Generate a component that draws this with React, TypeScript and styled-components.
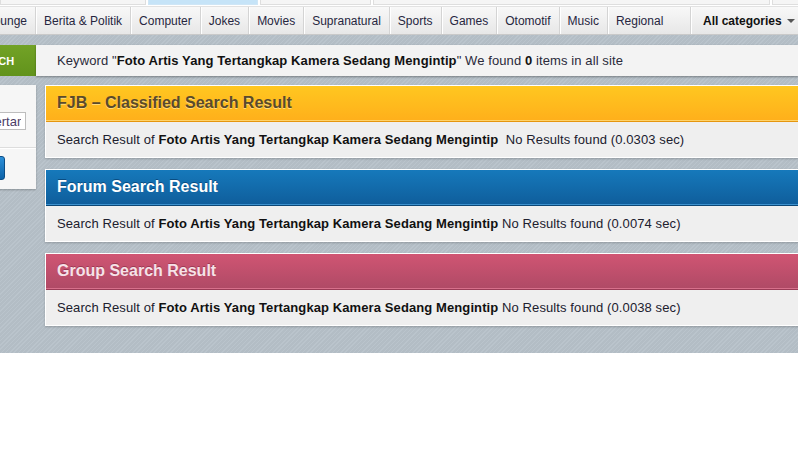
import React from 'react';
import styled, { createGlobalStyle, css } from 'styled-components';

const GlobalStyle = createGlobalStyle`
  html, body {
    margin: 0;
    padding: 0;
    background: #ffffff;
    font-family: "Liberation Sans", Arial, Helvetica, sans-serif;
    overflow: hidden;
  }
`;

type Tone = 'fjb' | 'forum' | 'group';

const tones = {
  fjb: {
    top: '#ffc720',
    bottom: '#ffb01b',
    border: '#e5960f',
    line: '#ffd36a',
    title: '#5a4a2c',
    shadow: '0 1px 0 rgba(255, 230, 150, 0.8)',
  },
  forum: {
    top: '#1679bb',
    bottom: '#0f5e9c',
    border: '#0b4776',
    line: '#3d92cf',
    title: '#ffffff',
    shadow: '0 -1px 0 rgba(0, 40, 80, 0.5)',
  },
  group: {
    top: '#d05573',
    bottom: '#b04a66',
    border: '#9b3b56',
    line: '#d7708b',
    title: '#f6e2e8',
    shadow: '0 -1px 0 rgba(90, 20, 40, 0.4)',
  },
};

const topTabs = [
  { width: 146, active: false },
  { width: 110, active: true },
  { width: 111, active: false },
  { width: 397, active: false },
  { width: 40, active: false },
];

const categories = [
  'Lounge',
  'Berita & Politik',
  'Computer',
  'Jokes',
  'Movies',
  'Supranatural',
  'Sports',
  'Games',
  'Otomotif',
  'Music',
  'Regional',
];

const query = 'Foto Artis Yang Tertangkap Kamera Sedang Mengintip';

const results: { tone: Tone; title: string; time: string; gap?: boolean }[] = [
  { tone: 'fjb', title: 'FJB – Classified Search Result', time: '0.0303', gap: true },
  { tone: 'forum', title: 'Forum Search Result', time: '0.0074' },
  { tone: 'group', title: 'Group Search Result', time: '0.0038' },
];

const App: React.FC = () => {
  return (
    <>
      <GlobalStyle />
      <Page>
        <TabStrip>
          {topTabs.map((t, i) => (
            <TabStub key={i} $width={t.width} $active={t.active} />
          ))}
        </TabStrip>
        <NavBar>
          <NavList>
            {categories.map((c) => (
              <NavItem key={c}>{c}</NavItem>
            ))}
          </NavList>
          <AllCategories>
            All categories
            <Caret />
          </AllCategories>
        </NavBar>
        <Main>
          <SearchRow>
            <SearchButton>SEARCH</SearchButton>
            <KeywordBar>
              Keyword "<b>{query}</b>" We found <b>0</b> items in all site
            </KeywordBar>
          </SearchRow>
          <Columns>
            <Sidebar>
              <SearchInput readOnly value={query} />
              <Divider />
              <SideButton />
            </Sidebar>
            <Results>
              {results.map((r) => (
                <Panel key={r.tone}>
                  <PanelHeader $tone={r.tone}>{r.title}</PanelHeader>
                  <PanelBody>
                    Search Result of <b>{query}</b>
                    {r.gap ? '\u00a0 ' : ' '}No Results found ({r.time} sec)
                  </PanelBody>
                </Panel>
              ))}
            </Results>
          </Columns>
        </Main>
      </Page>
    </>
  );
};

export default App;

const Page = styled.div`
  width: 798px;
  min-height: 460px;
  background: #ffffff;
  overflow: hidden;
`;

const TabStrip = styled.div`
  display: flex;
  gap: 2px;
  height: 6px;
  overflow: hidden;
`;

const TabStub = styled.div<{ $width: number; $active: boolean }>`
  flex: 0 0 ${(p) => p.$width}px;
  height: 5px;
  box-sizing: border-box;
  border: 1px solid #dedede;
  border-top: none;
  background: ${(p) => (p.$active ? '#c6e4f8' : '#f5f5f5')};
  ${(p) =>
    p.$active &&
    css`
      border-color: #cfe6f6;
    `}
`;

const NavBar = styled.div`
  display: flex;
  height: 29px;
  box-sizing: border-box;
  background: linear-gradient(#f8f8f8, #e7e7e7);
  border-top: 1px solid #e2e2e2;
  border-bottom: 1px solid #c9c9c9;
  font-size: 12px;
  color: #262640;
`;

const NavList = styled.div`
  flex: 1;
  display: flex;
  margin-left: -21px;
`;

const NavItem = styled.div`
  display: flex;
  align-items: center;
  padding: 0 8px;
  border-right: 1px solid #d4d4d4;
  box-shadow: 1px 0 0 #ffffff;
  white-space: nowrap;
  &:last-child {
    flex: 1;
    border-right: none;
    box-shadow: none;
  }
`;

const AllCategories = styled.div`
  display: flex;
  align-items: center;
  width: 95px;
  padding-left: 12px;
  border-left: 1px solid #d4d4d4;
  box-shadow: inset 1px 0 0 #ffffff;
  font-weight: bold;
  color: #111111;
  white-space: nowrap;
`;

const Caret = styled.span`
  display: inline-block;
  margin-left: 5px;
  width: 0;
  height: 0;
  border-left: 4px solid transparent;
  border-right: 4px solid transparent;
  border-top: 4px solid #555555;
`;

const Main = styled.div`
  background-color: #b6c0c8;
  background-image: repeating-linear-gradient(
    135deg,
    #bac4cc 0px,
    #bac4cc 1px,
    #b3bdc5 1px,
    #b3bdc5 3px
  );
  padding: 10px 0 27px;
`;

const SearchRow = styled.div`
  display: flex;
  height: 31px;
`;

const SearchButton = styled.div`
  flex: 0 0 90px;
  margin-left: -54px;
  display: flex;
  align-items: center;
  justify-content: center;
  background: linear-gradient(#72a226, #62931c);
  color: #ffffff;
  font-size: 11px;
  font-weight: bold;
`;

const KeywordBar = styled.div`
  flex: 1;
  padding-left: 21px;
  line-height: 31px;
  background: #f3f3f3;
  box-shadow: 0 1px 2px rgba(0, 0, 0, 0.35);
  font-size: 13px;
  letter-spacing: 0.1px;
  color: #2a2a3a;
  white-space: nowrap;
  b {
    color: #111111;
  }
`;

const Columns = styled.div`
  display: flex;
  align-items: flex-start;
  gap: 9px;
  margin-top: 9px;
`;

const Sidebar = styled.div`
  flex: 0 0 150px;
  min-width: 0;
  margin-left: -114px;
  box-sizing: border-box;
  padding: 27px 10px 9px;
  background: #f6f6f6;
  box-shadow: 0 1px 2px rgba(0, 0, 0, 0.25);
  display: flex;
  flex-direction: column;
`;

const SearchInput = styled.input`
  width: 100%;
  min-width: 0;
  height: 18px;
  box-sizing: border-box;
  padding: 0 4px 0 0;
  border: 1px solid #bdbdbd;
  background: #ffffff;
  font-family: inherit;
  font-size: 13px;
  color: #4a3d66;
  outline: none;
`;

const Divider = styled.div`
  height: 1px;
  margin: 17px -10px 8px;
  background: #dddddd;
  box-shadow: 0 1px 0 #ffffff;
`;

const SideButton = styled.div`
  width: 109px;
  height: 24px;
  box-sizing: border-box;
  border: 1px solid #0b4d86;
  border-radius: 3px;
  background: linear-gradient(#2c8fd8, #0c62a8);
`;

const Results = styled.div`
  flex: 1;
  min-width: 0;
  display: flex;
  flex-direction: column;
  gap: 11px;
  margin-right: -20px;
`;

const Panel = styled.div`
  border: 1px solid #ffffff;
  box-shadow: 0 1px 2px rgba(0, 0, 0, 0.2);
`;

const PanelHeader = styled.div<{ $tone: Tone }>`
  height: 35px;
  box-sizing: border-box;
  display: flex;
  align-items: center;
  padding-left: 11px;
  background: linear-gradient(${(p) => tones[p.$tone].top}, ${(p) => tones[p.$tone].bottom});
  border-bottom: 1px solid ${(p) => tones[p.$tone].line};
  box-shadow: 0 1px 0 ${(p) => tones[p.$tone].border};
  margin-bottom: 1px;
  color: ${(p) => tones[p.$tone].title};
  text-shadow: ${(p) => tones[p.$tone].shadow};
  font-size: 16px;
  font-weight: bold;
`;

const PanelBody = styled.div`
  height: 35px;
  line-height: 35px;
  padding-left: 11px;
  background: #efefef;
  font-size: 13px;
  letter-spacing: 0.1px;
  color: #20202e;
  white-space: nowrap;
  b {
    color: #111111;
  }
`;
